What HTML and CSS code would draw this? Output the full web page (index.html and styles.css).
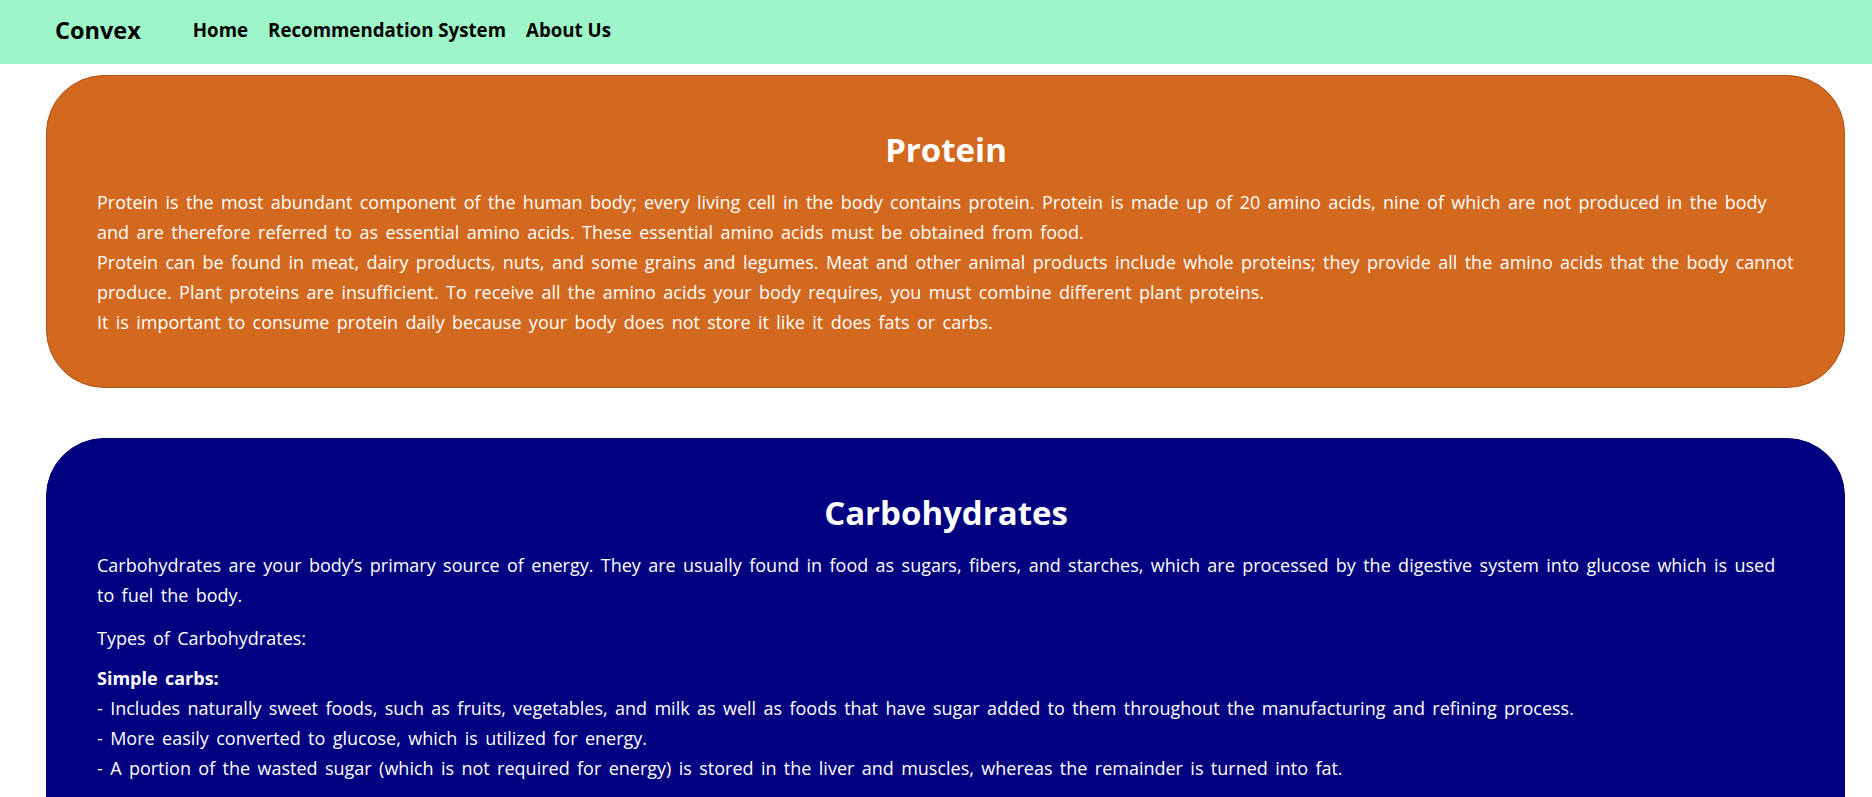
FILE: index.html
```html
<!DOCTYPE html>
<html lang="en">
<head>
<meta charset="utf-8">
<title>Convex - Nutrition</title>
<link rel="stylesheet" href="styles.css">
</head>
<body>
<nav class="navbar">
  <a class="brand" href="#">Convex</a>
  <ul class="nav-links">
    <li><a href="#">Home</a></li>
    <li><a href="#">Recommendation System</a></li>
    <li><a href="#">About Us</a></li>
  </ul>
</nav>
<main class="content">
  <section class="card card-protein">
    <h1>Protein</h1>
    <p>Protein is the most abundant component of the human body; every living cell in the body contains protein. Protein is made up of 20 amino acids, nine of which are not produced in the body and are therefore referred to as essential amino acids. These essential amino acids must be obtained from food.<br>Protein can be found in meat, dairy products, nuts, and some grains and legumes. Meat and other animal products include whole proteins; they provide all the amino acids that the body cannot produce. Plant proteins are insufficient. To receive all the amino acids your body requires, you must combine different plant proteins.<br>It is important to consume protein daily because your body does not store it like it does fats or carbs.</p>
  </section>
  <section class="card card-carbs">
    <h1>Carbohydrates</h1>
    <p>Carbohydrates are your body’s primary source of energy. They are usually found in food as sugars, fibers, and starches, which are processed by the digestive system into glucose which is used to fuel the body.</p>
    <p>Types of Carbohydrates:</p>
    <p class="tight"><b>Simple carbs:</b><br>- Includes naturally sweet foods, such as fruits, vegetables, and milk as well as foods that have sugar added to them throughout the manufacturing and refining process.<br>- More easily converted to glucose, which is utilized for energy.<br>- A portion of the wasted sugar (which is not required for energy) is stored in the liver and muscles, whereas the remainder is turned into fat.</p>
    <p><b>Complex carbs:</b><br>- Found in whole grains, legumes, and starchy vegetables.<br>- Digested more slowly, providing a steady release of energy.</p>
  </section>
</main>
</body>
</html>
```

FILE: styles.css
```css
* {
  box-sizing: border-box;
}

html, body {
  margin: 0;
  padding: 0;
  background: #ffffff;
}

body {
  font-family: "Open Sans", "Noto Sans", sans-serif;
  color: #000;
}

.navbar {
  height: 64px;
  background: #9ef5c8;
  display: flex;
  align-items: center;
  padding: 0 0 5px 55px;
}

.brand {
  font-size: 23.5px;
  font-weight: 700;
  color: #000;
  text-decoration: none;
  margin-right: 52px;
}

.nav-links {
  list-style: none;
  margin: 0;
  padding: 0;
  display: flex;
  gap: 20px;
}

.nav-links a {
  font-size: 18.7px;
  font-weight: 700;
  color: #000;
  text-decoration: none;
}

.content {
  padding: 11px 27px 0 46px;
}

.card {
  border-radius: 58px;
  padding: 52px 49px 50px 50px;
  color: #fff;
  margin-bottom: 50px;
  border: 1px solid transparent;
}

.card-protein {
  background: #d2691e;
  border-color: #a9541a;
}

.card-carbs {
  background: #000080;
  border-color: #000070;
}

.card h1 {
  font-size: 33px;
  font-weight: 700;
  line-height: 44px;
  text-align: center;
  margin: 0 0 15px;
}

.card p {
  font-size: 18px;
  line-height: 30px;
  word-spacing: 2.7px;
  margin: 0;
}

.card p + p {
  margin-top: 13px;
}

.card p + p.tight {
  margin-top: 10px;
}
```
